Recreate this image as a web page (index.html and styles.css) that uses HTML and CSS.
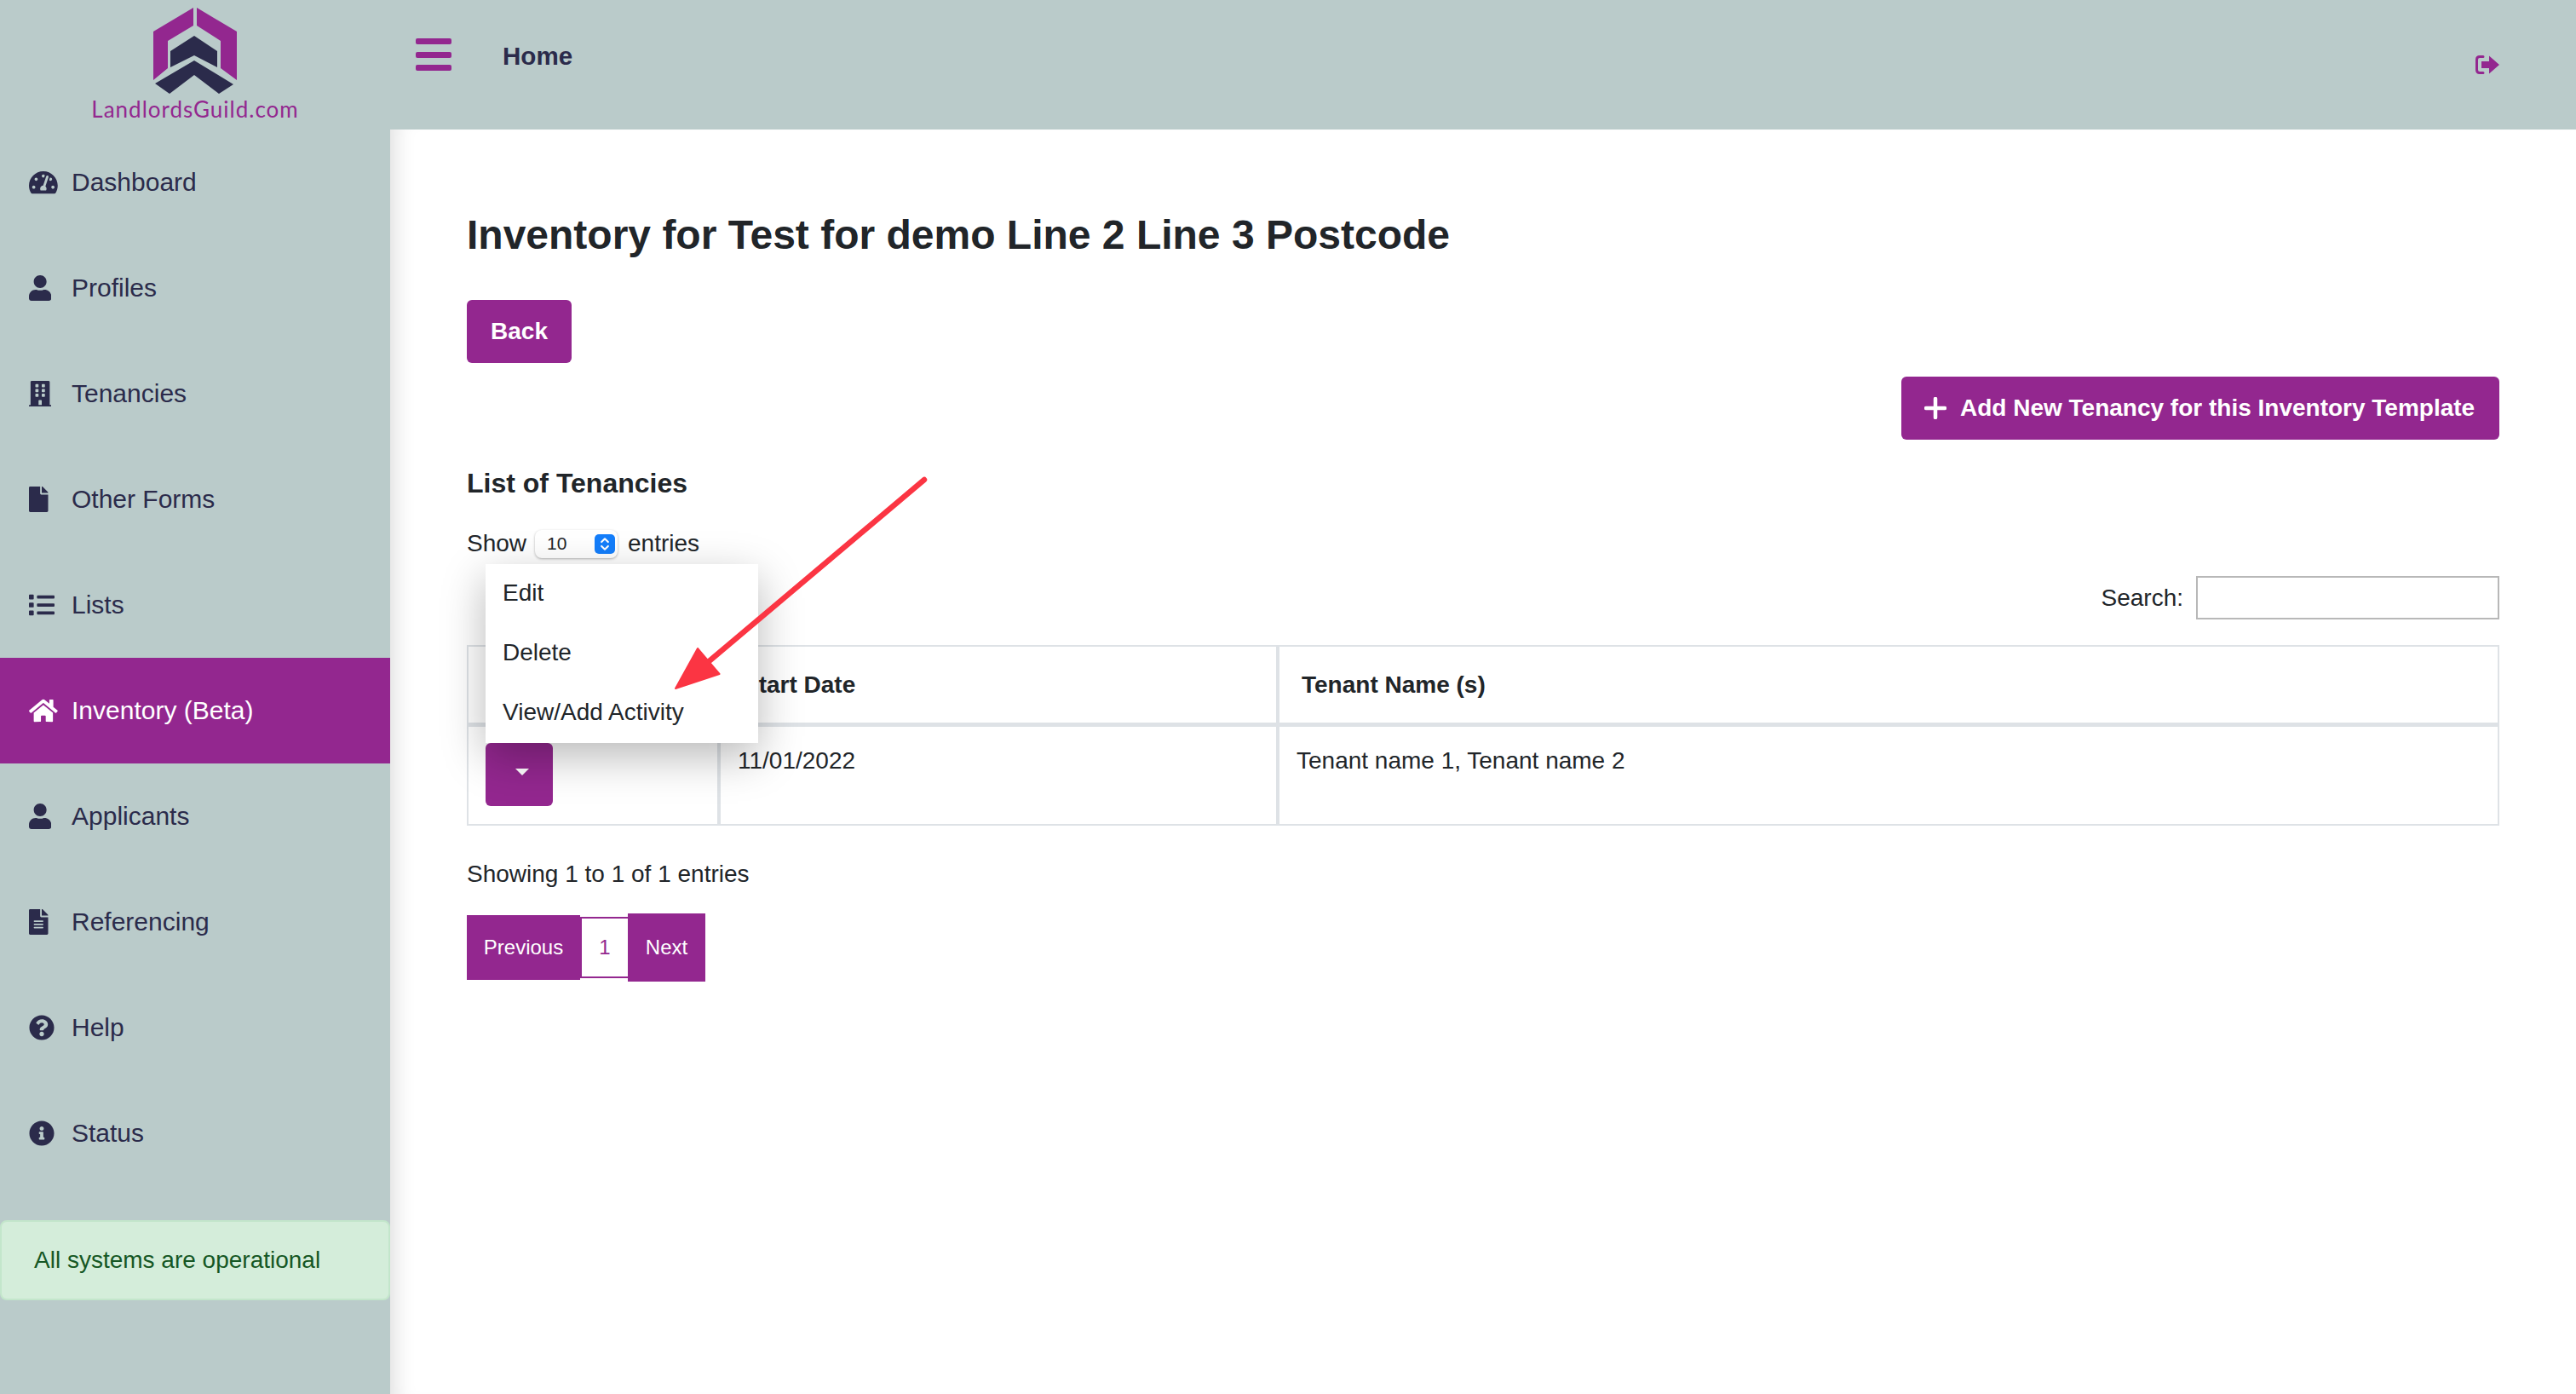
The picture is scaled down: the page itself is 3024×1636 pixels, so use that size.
FILE: index.html
```html
<!DOCTYPE html>
<html lang="en">
<head>
    <meta charset="UTF-8">
    <title>Inventory for Test for demo</title>
    <link rel="stylesheet" href="styles.css">
</head>
<body>
<div class="page">

    <!-- Sidebar -->
    <aside class="sidebar">
        <div class="brand">
            <svg class="brand-mark" viewBox="170 0 118 114">
                <polygon fill="#93278f" points="227,9 180,37 180,94 197,80 197,48 227,30"/>
                <polygon fill="#93278f" points="231,9 278,37 278,94 259,80 259,48 231,30"/>
                <polygon fill="#2b2b4b" points="228,42 255,60 255,79 228,65 200,79 200,60"/>
                <polygon fill="#2b2b4b" points="228,71 274,99 257,110 228,88 199,110 182,98"/>
            </svg>
            <span class="brand-name">LandlordsGuild.com</span>
        </div>

        <nav class="nav">
            <a class="nav-item"><span class="nav-icon"><svg viewBox="0 0 576 512"><path d="M288 32C128.94 32 0 160.94 0 320c0 52.8 14.25 102.26 39.06 144.8 5.61 9.62 16.3 15.2 27.44 15.2h443c11.14 0 21.83-5.58 27.44-15.2C561.75 422.26 576 372.8 576 320c0-159.06-128.94-288-288-288zm0 64c14.71 0 26.58 10.13 30.32 23.65-1.11 2.26-2.64 4.23-3.45 6.67l-9.22 27.67c-5.13 3.49-10.97 6.01-17.64 6.01-17.67 0-32-14.33-32-32S270.33 96 288 96zM96 384c-17.67 0-32-14.33-32-32s14.33-32 32-32 32 14.33 32 32-14.33 32-32 32zm48-160c-17.67 0-32-14.33-32-32s14.33-32 32-32 32 14.33 32 32-14.33 32-32 32zm246.77-72.41l-61.33 184C343.13 347.33 352 364.54 352 384c0 11.72-3.38 22.55-8.88 32H232.88c-5.5-9.45-8.88-20.28-8.88-32 0-33.94 26.5-61.43 59.9-63.59l61.34-184.01c4.17-12.56 17.73-19.45 30.36-15.17 12.57 4.19 19.35 17.79 15.17 30.36zm14.66 57.2l15.52-46.55c3.47-1.29 7.13-2.23 11.05-2.23 17.67 0 32 14.33 32 32s-14.33 32-32 32c-11.38-.01-20.89-6.28-26.57-15.22zM480 384c-17.67 0-32-14.33-32-32s14.33-32 32-32 32 14.33 32 32-14.33 32-32 32z"/></svg></span>Dashboard</a>
            <a class="nav-item"><span class="nav-icon"><svg viewBox="0 0 448 512"><path d="M224 256c70.7 0 128-57.3 128-128S294.7 0 224 0 96 57.3 96 128s57.3 128 128 128zm89.6 32h-16.7c-22.2 10.2-46.9 16-72.9 16s-50.6-5.8-72.9-16h-16.7C60.2 288 0 348.2 0 422.4V464c0 26.5 21.5 48 48 48h352c26.5 0 48-21.5 48-48v-41.6c0-74.2-60.2-134.4-134.4-134.4z"/></svg></span>Profiles</a>
            <a class="nav-item"><span class="nav-icon"><svg viewBox="0 0 448 512"><path d="M436 480h-20V24c0-13.255-10.745-24-24-24H56C42.745 0 32 10.745 32 24v456H12c-6.627 0-12 5.373-12 12v20h448v-20c0-6.627-5.373-12-12-12zM128 76c0-6.627 5.373-12 12-12h40c6.627 0 12 5.373 12 12v40c0 6.627-5.373 12-12 12h-40c-6.627 0-12-5.373-12-12V76zm0 96c0-6.627 5.373-12 12-12h40c6.627 0 12 5.373 12 12v40c0 6.627-5.373 12-12 12h-40c-6.627 0-12-5.373-12-12v-40zm52 148h-40c-6.627 0-12-5.373-12-12v-40c0-6.627 5.373-12 12-12h40c6.627 0 12 5.373 12 12v40c0 6.627-5.373 12-12 12zm76 160h-64v-84c0-6.627 5.373-12 12-12h40c6.627 0 12 5.373 12 12v84zm64-172c0 6.627-5.373 12-12 12h-40c-6.627 0-12-5.373-12-12v-40c0-6.627 5.373-12 12-12h40c6.627 0 12 5.373 12 12v40zm0-96c0 6.627-5.373 12-12 12h-40c-6.627 0-12-5.373-12-12v-40c0-6.627 5.373-12 12-12h40c6.627 0 12 5.373 12 12v40zm0-96c0 6.627-5.373 12-12 12h-40c-6.627 0-12-5.373-12-12V76c0-6.627 5.373-12 12-12h40c6.627 0 12 5.373 12 12v40z"/></svg></span>Tenancies</a>
            <a class="nav-item"><span class="nav-icon"><svg viewBox="0 0 384 512"><path d="M224 136V0H24C10.7 0 0 10.7 0 24v464c0 13.3 10.7 24 24 24h336c13.3 0 24-10.7 24-24V160H248c-13.2 0-24-10.8-24-24zm160-14.1v6.1H256V0h6.1c6.4 0 12.5 2.5 17 7l97.9 98c4.5 4.5 7 10.6 7 16.9z"/></svg></span>Other Forms</a>
            <a class="nav-item"><span class="nav-icon"><svg viewBox="0 0 512 512"><path d="M80 368H16a16 16 0 0 0-16 16v64a16 16 0 0 0 16 16h64a16 16 0 0 0 16-16v-64a16 16 0 0 0-16-16zm0-320H16A16 16 0 0 0 0 64v64a16 16 0 0 0 16 16h64a16 16 0 0 0 16-16V64a16 16 0 0 0-16-16zm0 160H16a16 16 0 0 0-16 16v64a16 16 0 0 0 16 16h64a16 16 0 0 0 16-16v-64a16 16 0 0 0-16-16zm416 176H176a16 16 0 0 0-16 16v32a16 16 0 0 0 16 16h320a16 16 0 0 0 16-16v-32a16 16 0 0 0-16-16zm0-320H176a16 16 0 0 0-16 16v32a16 16 0 0 0 16 16h320a16 16 0 0 0 16-16V80a16 16 0 0 0-16-16zm0 160H176a16 16 0 0 0-16 16v32a16 16 0 0 0 16 16h320a16 16 0 0 0 16-16v-32a16 16 0 0 0-16-16z"/></svg></span>Lists</a>
            <a class="nav-item active"><span class="nav-icon"><svg viewBox="0 0 576 512"><path d="M280.37 148.26L96 300.11V464a16 16 0 0 0 16 16l112.06-.29a16 16 0 0 0 15.92-16V368a16 16 0 0 1 16-16h64a16 16 0 0 1 16 16v95.64a16 16 0 0 0 16 16.05L464 480a16 16 0 0 0 16-16V300L295.67 148.26a12.19 12.19 0 0 0-15.3 0zM571.6 251.47L488 182.56V44.05a12 12 0 0 0-12-12h-56a12 12 0 0 0-12 12v72.61L318.47 43a48 48 0 0 0-61 0L4.34 251.47a12 12 0 0 0-1.6 16.9l25.5 31A12 12 0 0 0 45.15 301l235.22-193.74a12.19 12.19 0 0 1 15.3 0L530.9 301a12 12 0 0 0 16.9-1.6l25.5-31a12 12 0 0 0-1.7-16.93z"/></svg></span>Inventory (Beta)</a>
            <a class="nav-item"><span class="nav-icon"><svg viewBox="0 0 448 512"><path d="M224 256c70.7 0 128-57.3 128-128S294.7 0 224 0 96 57.3 96 128s57.3 128 128 128zm89.6 32h-16.7c-22.2 10.2-46.9 16-72.9 16s-50.6-5.8-72.9-16h-16.7C60.2 288 0 348.2 0 422.4V464c0 26.5 21.5 48 48 48h352c26.5 0 48-21.5 48-48v-41.6c0-74.2-60.2-134.4-134.4-134.4z"/></svg></span>Applicants</a>
            <a class="nav-item"><span class="nav-icon"><svg viewBox="0 0 384 512"><path d="M224 136V0H24C10.7 0 0 10.7 0 24v464c0 13.3 10.7 24 24 24h336c13.3 0 24-10.7 24-24V160H248c-13.2 0-24-10.8-24-24zm64 236c0 6.6-5.4 12-12 12H108c-6.6 0-12-5.4-12-12v-8c0-6.6 5.4-12 12-12h168c6.6 0 12 5.4 12 12v8zm0-64c0 6.6-5.4 12-12 12H108c-6.6 0-12-5.4-12-12v-8c0-6.6 5.4-12 12-12h168c6.6 0 12 5.4 12 12v8zm0-72v8c0 6.6-5.4 12-12 12H108c-6.6 0-12-5.4-12-12v-8c0-6.6 5.4-12 12-12h168c6.6 0 12 5.4 12 12zm96-114.1v6.1H256V0h6.1c6.4 0 12.5 2.5 17 7l97.9 98c4.5 4.5 7 10.6 7 16.9z"/></svg></span>Referencing</a>
            <a class="nav-item"><span class="nav-icon"><svg viewBox="0 0 512 512"><path d="M504 256c0 136.997-111.043 248-248 248S8 392.997 8 256C8 119.083 119.043 8 256 8s248 111.083 248 248zM262.655 90c-54.497 0-89.255 22.957-116.549 63.758-3.536 5.286-2.353 12.415 2.715 16.258l34.699 26.31c5.205 3.947 12.621 3.008 16.665-2.122 17.864-22.658 30.113-35.797 57.303-35.797 20.429 0 45.698 13.148 45.698 32.958 0 14.976-12.363 22.667-32.534 33.976C247.128 238.528 216 254.941 216 296v4c0 6.627 5.373 12 12 12h56c6.627 0 12-5.373 12-12v-1.333c0-28.462 83.186-29.647 83.186-106.667 0-58.002-60.165-102-116.531-102zM256 338c-25.365 0-46 20.635-46 46 0 25.364 20.635 46 46 46s46-20.636 46-46c0-25.365-20.635-46-46-46z"/></svg></span>Help</a>
            <a class="nav-item"><span class="nav-icon"><svg viewBox="0 0 512 512"><path d="M256 8C119.043 8 8 119.083 8 256c0 136.997 111.043 248 248 248s248-111.003 248-248C504 119.083 392.957 8 256 8zm0 110c23.196 0 42 18.804 42 42s-18.804 42-42 42-42-18.804-42-42 18.804-42 42-42zm56 254c0 6.627-5.373 12-12 12h-88c-6.627 0-12-5.373-12-12v-24c0-6.627 5.373-12 12-12h12v-64h-12c-6.627 0-12-5.373-12-12v-24c0-6.627 5.373-12 12-12h64c6.627 0 12 5.373 12 12v100h12c6.627 0 12 5.373 12 12v24z"/></svg></span>Status</a>
        </nav>

        <div class="status-alert">All systems are operational</div>
    </aside>

    <div class="main">
        <!-- Top bar -->
        <header class="topbar">
            <div class="hamburger"><span></span><span></span><span></span></div>
            <span class="topbar-title">Home</span>
            <svg class="logout" viewBox="0 0 28 22">
                <path d="M9 1.5H5C2.8 1.5 1.5 2.8 1.5 5v12c0 2.2 1.3 3.5 3.5 3.5h4" fill="none" stroke="#93278f" stroke-width="3" stroke-linecap="round"/>
                <polygon fill="#93278f" points="7,7 16,7 16,0.5 28,11 16,21.5 16,15 7,15"/>
            </svg>
        </header>

        <main class="content">
            <h1 class="page-title">Inventory for Test for demo Line 2 Line 3 Postcode</h1>
            <button class="btn btn-back">Back</button>

            <div class="add-row">
                <button class="btn btn-add">
                    <svg class="plus" viewBox="0 0 26 26"><path d="M13 2v22M2 13h22" stroke="#fff" stroke-width="4.5" stroke-linecap="round"/></svg>
                    Add New Tenancy for this Inventory Template
                </button>
            </div>

            <h2 class="list-title">List of Tenancies</h2>

            <div class="show-row">
                Show
                <div class="page-select">
                    <span>10</span>
                    <span class="stepper">
                        <svg viewBox="0 0 24 24"><path d="M8 9.5l4-4 4 4M8 14.5l4 4 4-4" fill="none" stroke="#fff" stroke-width="2.2" stroke-linecap="round" stroke-linejoin="round"/></svg>
                    </span>
                </div>
                entries
            </div>

            <div class="search-row">
                <label for="search">Search:</label>
                <input id="search" class="search-input" type="text">
            </div>

            <!-- Tenancies table -->
            <table class="tenancies">
                <thead>
                    <tr>
                        <th class="col-action"></th>
                        <th class="col-date">Start Date</th>
                        <th class="col-name">Tenant Name (s)</th>
                    </tr>
                </thead>
                <tbody>
                    <tr>
                        <td>
                            <div class="action-wrap">
                                <button class="btn btn-action"><span class="caret"></span></button>
                                <ul class="action-menu">
                                    <li>Edit</li>
                                    <li>Delete</li>
                                    <li>View/Add Activity</li>
                                </ul>
                            </div>
                        </td>
                        <td>11/01/2022</td>
                        <td>Tenant name 1, Tenant name 2</td>
                    </tr>
                </tbody>
            </table>

            <div class="table-info">Showing 1 to 1 of 1 entries</div>

            <div class="pager">
                <a class="pager-prev">Previous</a>
                <a class="pager-num">1</a>
                <a class="pager-next">Next</a>
            </div>

            <!-- Red arrow annotation -->
            <svg class="annotation" width="320" height="270" viewBox="0 0 320 270">
                <path d="M305 13L50 228" stroke="#fb3543" stroke-width="6.5" stroke-linecap="round"/>
                <polygon points="13,258 39,211 64.5,241" fill="#fb3543" stroke="#fb3543" stroke-width="2" stroke-linejoin="round"/>
            </svg>
        </main>
    </div>
</div>
</body>
</html>
```

FILE: styles.css
```css
/* Base */
html, body {
    margin: 0;
    padding: 0;
    height: 100%;
}

body {
    font-family: "Liberation Sans", Arial, sans-serif;
    font-size: 28px;
    line-height: 44px;
    color: #212529;
    background: #fff;
    overflow: hidden;
}

.page {
    display: flex;
    min-height: 100vh;
}

/* Sidebar */
.sidebar {
    width: 458px;
    flex-shrink: 0;
    background: #bacbca;
    color: #2b2b4b;
}

.brand {
    height: 152px;
    display: flex;
    flex-direction: column;
    align-items: center;
}

.brand-mark {
    width: 118px;
    height: 114px;
    flex-shrink: 0;
}

.brand-name {
    font-family: "Lato", sans-serif;
    font-size: 26px;
    line-height: 28px;
    letter-spacing: 1px;
    color: #93278f;
}

.nav-item {
    height: 124px;
    display: flex;
    align-items: center;
    padding-left: 34px;
    font-size: 30px;
    color: #2b2b4b;
}

.nav-item.active {
    background: #93278f;
    color: #fff;
}

.nav-icon {
    width: 50px;
    height: 30px;
    display: block;
    flex-shrink: 0;
}

.nav-icon svg {
    display: block;
    height: 30px;
    width: auto;
    fill: currentColor;
}

.status-alert {
    margin-top: 40px;
    height: 94px;
    box-sizing: border-box;
    padding-left: 38px;
    display: flex;
    align-items: center;
    background: #d4edda;
    border: 2px solid #c3e6cb;
    border-radius: 8px;
    color: #155724;
}

/* Top bar */
.main {
    flex: 1;
    min-width: 0;
}

.topbar {
    height: 152px;
    background: #bacbca;
    display: flex;
    padding: 45px 90px 0 30px;
    box-sizing: border-box;
}

.hamburger {
    width: 42px;
    height: 38px;
    display: flex;
    flex-direction: column;
    justify-content: space-between;
}

.hamburger span {
    display: block;
    height: 7px;
    border-radius: 2px;
    background: #93278f;
}

.topbar-title {
    margin-left: 60px;
    font-size: 29.6px;
    font-weight: bold;
    line-height: 42px;
    color: #2b2b4b;
}

.logout {
    width: 28px;
    height: 22px;
    margin-left: auto;
    margin-top: 20px;
}

/* Content */
.content {
    position: relative;
    height: calc(100vh - 152px);
    box-sizing: border-box;
    padding: 95px 90px 0 90px;
    box-shadow: inset 26px 0 24px -20px rgba(0, 0, 0, 0.13);
}

.page-title {
    margin: 0;
    font-size: 48px;
    line-height: 58px;
    font-weight: bold;
}

.btn {
    border: 0;
    border-radius: 6px;
    background: #93278f;
    color: #fff;
    font-family: inherit;
    font-size: 28px;
    font-weight: bold;
    padding: 0;
}

.btn-back {
    display: block;
    margin-top: 47px;
    width: 123px;
    height: 74px;
}

.add-row {
    margin-top: 16px;
    display: flex;
    justify-content: flex-end;
}

.btn-add {
    width: 702px;
    height: 74px;
    display: flex;
    align-items: center;
    padding-left: 27px;
}

.plus {
    width: 26px;
    height: 26px;
    margin-right: 16px;
}

.list-title {
    margin: 32px 0 0;
    font-size: 32px;
    line-height: 38px;
    font-weight: bold;
}

/* Show entries */
.show-row {
    margin-top: 30px;
    height: 44px;
    display: flex;
    align-items: center;
}

.page-select {
    width: 97px;
    height: 33px;
    margin: 0 12px 0 10px;
    box-sizing: border-box;
    border-radius: 8px;
    background: #fff;
    box-shadow: 0 1px 3px rgba(0, 0, 0, 0.3);
    display: flex;
    align-items: center;
    justify-content: space-between;
    padding: 0 3px 0 14px;
    font-size: 21px;
}

.stepper {
    width: 24px;
    height: 23px;
    border-radius: 5px;
    background: #147efb;
    display: block;
}

.stepper svg {
    display: block;
    width: 24px;
    height: 23px;
}

/* Search */
.search-row {
    margin-top: 16px;
    display: flex;
    justify-content: flex-end;
    align-items: center;
    height: 51px;
}

.search-row label {
    margin-right: 15px;
}

.search-input {
    width: 356px;
    height: 51px;
    box-sizing: border-box;
    border: 2px solid #b8b8b8;
    background: #fff;
    padding: 0 8px;
}

/* Table */
.tenancies {
    margin-top: 30px;
    width: 100%;
    table-layout: fixed;
    border-collapse: separate;
    border-spacing: 0;
}

.col-action {
    width: 296px;
}

.col-date {
    width: 656px;
}

.tenancies th {
    box-sizing: border-box;
    height: 96px;
    padding: 0 0 0 26px;
    text-align: left;
    font-weight: bold;
    border: 2px solid #dee2e6;
    border-bottom-width: 5px;
}

.tenancies td {
    box-sizing: border-box;
    height: 116px;
    padding: 18px 20px 20px 20px;
    vertical-align: top;
    border: 2px solid #dee2e6;
    border-top: 0;
}

.action-wrap {
    position: relative;
    width: 79px;
}

.btn-action {
    display: flex;
    align-items: center;
    justify-content: center;
    width: 79px;
    height: 74px;
    margin-top: 1px;
}

.caret {
    display: block;
    margin-left: 6px;
    margin-bottom: 6px;
    border-top: 8px solid #fff;
    border-left: 8px solid transparent;
    border-right: 8px solid transparent;
}

.action-menu {
    position: absolute;
    left: 0;
    bottom: 74px;
    width: 320px;
    height: 210px;
    margin: 0;
    padding: 0;
    list-style: none;
    background: #fff;
    box-shadow: 0 16px 48px rgba(0, 0, 0, 0.28);
}

.action-menu li {
    height: 70px;
    line-height: 68px;
    padding-left: 20px;
}

.table-info {
    margin-top: 35px;
}

/* Pagination */
.pager {
    margin-top: 24px;
    height: 80px;
    display: flex;
    align-items: center;
    font-size: 24px;
    color: #fff;
}

.pager-prev,
.pager-next {
    display: flex;
    align-items: center;
    justify-content: center;
    background: #93278f;
}

.pager-prev {
    width: 133px;
    height: 76px;
}

.pager-next {
    width: 91px;
    height: 80px;
}

.pager-num {
    width: 56px;
    height: 72px;
    box-sizing: border-box;
    display: flex;
    align-items: center;
    justify-content: center;
    color: #93278f;
    border: 2px solid #93278f;
    border-right: 0;
}

/* Annotation arrow sits over the table and the menu */
.annotation {
    position: absolute;
    left: 322px;
    top: 398px;
}
```
